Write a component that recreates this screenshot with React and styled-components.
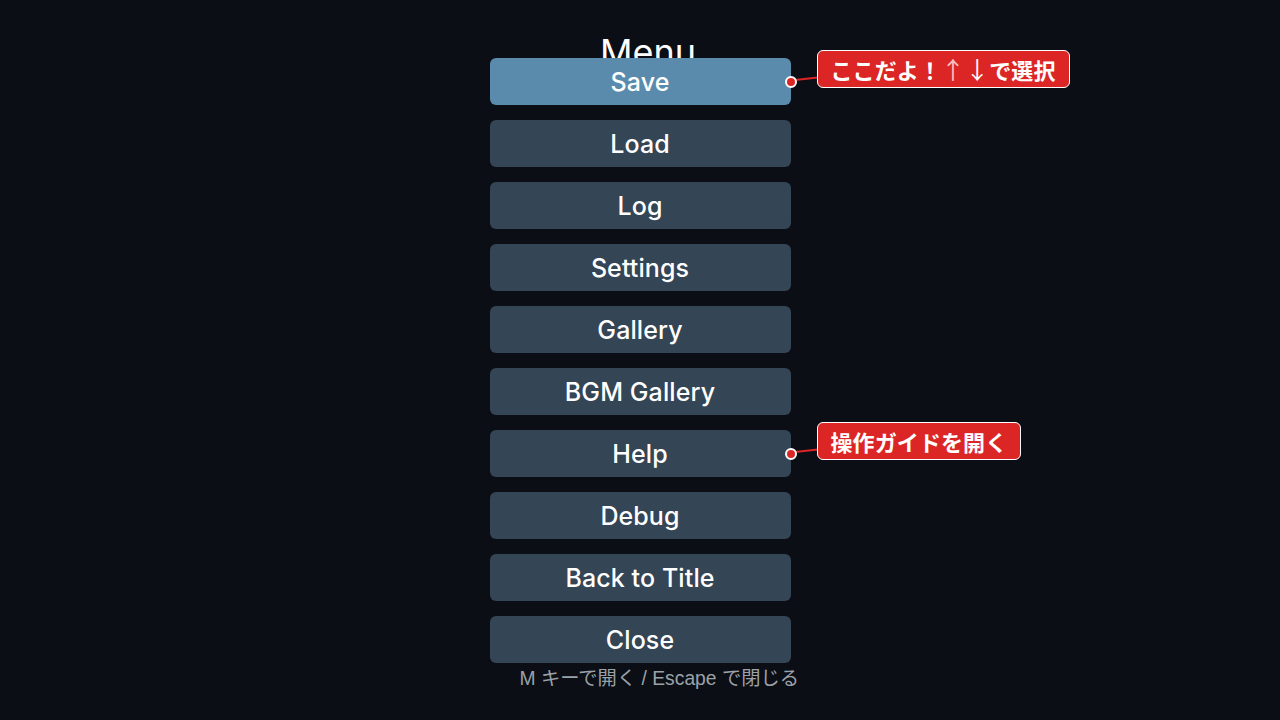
import React from "react";
import styled, { createGlobalStyle } from "styled-components";

const Global = createGlobalStyle`
  html, body { margin: 0; padding: 0; background: #0b0e15; }
  body { font-family: Inter, "Noto Sans CJK JP", sans-serif; }
  #root { min-height: 720px; }
`;

const Screen = styled.div`
  width: 1280px;
  height: 720px;
  overflow: hidden;
  background: #0b0e15;
  display: flex;
  flex-direction: column;
  align-items: center;
  padding-top: 31px;
  box-sizing: border-box;
`;

const Title = styled.h1`
  margin: 0 0 -16px;
  padding-left: 16px;
  font-family: Inter, sans-serif;
  font-weight: 400;
  font-size: 36px;
  line-height: 1.2;
  color: #ffffff;
`;

const List = styled.div`
  display: flex;
  flex-direction: column;
  gap: 15px;
  width: 301px;
  position: relative;
`;

const Item = styled.div`
  position: relative;
  height: 47px;
  border-radius: 6px;
  background: ${(p) => (p.$active ? "#5a8bad" : "#344556")};
  color: #ffffff;
  display: flex;
  align-items: center;
  justify-content: center;
  font-family: Inter, sans-serif;
  font-weight: 500;
  font-size: 25px;
  letter-spacing: 0.1px;
`;

const Dot = styled.span`
  position: absolute;
  right: -6px;
  top: 18px;
  width: 8px;
  height: 8px;
  border-radius: 50%;
  background: #dc2626;
  border: 2px solid #ffffff;
`;

const Line = styled.span`
  position: absolute;
  left: 305px;
  top: 21px;
  width: 23px;
  height: 2px;
  background: #dc2626;
  transform: rotate(-6deg);
  transform-origin: left center;
`;

const Badge = styled.div`
  position: absolute;
  left: 327px;
  top: -8px;
  height: 38px;
  box-sizing: border-box;
  padding: 0 13px;
  display: flex;
  align-items: center;
  white-space: nowrap;
  background: #dc2626;
  border: 1.5px solid #ffffff;
  border-radius: 6px;
  color: #ffffff;
  font-family: "Noto Sans CJK JP", sans-serif;
  font-weight: 700;
  font-size: 22px;
  line-height: 1;
`;

const Arrow = styled.span`
  font-weight: 400;
  font-size: 24px;
  margin-right: ${(p) => p.$gap || 0}px;
  color: ${(p) => (p.$dim ? "rgba(255,255,255,0.72)" : "#ffffff")};
`;

const Footer = styled.div`
  width: 301px;
  margin-top: 4px;
  padding-left: 30px;
  box-sizing: border-box;
  white-space: nowrap;
  font-family: "Liberation Sans", "Noto Sans CJK JP", sans-serif;
  font-size: 19.3px;
  line-height: 1.2;
  color: #9ba1a8;
`;

const items = [
  "Save",
  "Load",
  "Log",
  "Settings",
  "Gallery",
  "BGM Gallery",
  "Help",
  "Debug",
  "Back to Title",
  "Close",
];

const callouts = {
  Save: (
    <>
      ここだよ！<Arrow $dim $gap={0}>↑</Arrow>
      <Arrow $gap={0}>↓</Arrow>で選択
    </>
  ),
  Help: <>操作ガイドを開く</>,
};

export default function App() {
  return (
    <>
      <Global />
      <Screen>
        <Title>Menu</Title>
        <List>
          {items.map((label, i) => {
            const c = callouts[label];
            return (
              <Item key={label} $active={i === 0}>
                {label}
                {c && (
                  <>
                    <Line />
                    <Dot />
                    <Badge>{c}</Badge>
                  </>
                )}
              </Item>
            );
          })}
        </List>
        <Footer>M キーで開く / Escape で閉じる</Footer>
      </Screen>
    </>
  );
}
